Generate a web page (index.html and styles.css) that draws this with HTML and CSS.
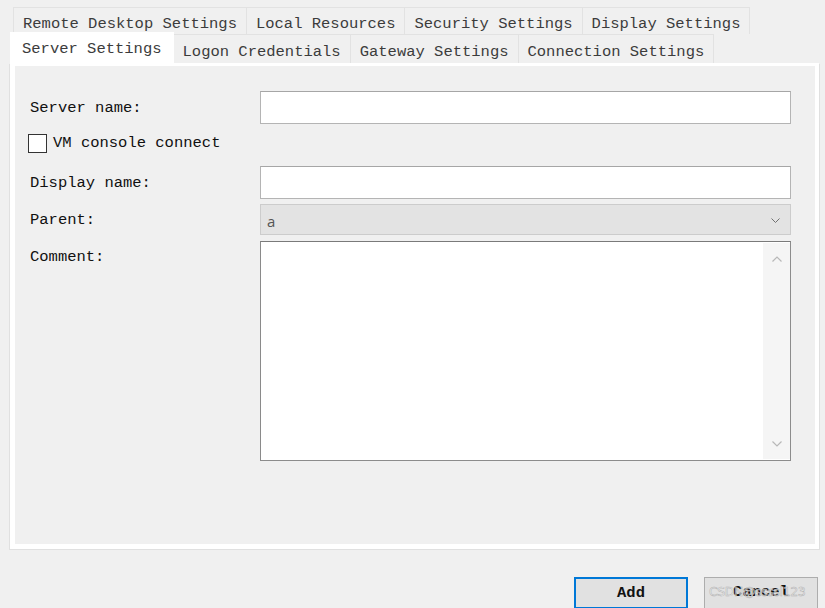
FILE: index.html
```html
<!DOCTYPE html>
<html>
<head>
<meta charset="utf-8">
<link rel="stylesheet" href="styles.css">
</head>
<body>
<div class="tabs">
  <div class="tab-row row1">
    <div class="tab">Remote Desktop Settings</div>
    <div class="tab">Local Resources</div>
    <div class="tab">Security Settings</div>
    <div class="tab">Display Settings</div>
  </div>
  <div class="tab-row row2">
    <div class="tab active">Server Settings</div>
    <div class="tab">Logon Credentials</div>
    <div class="tab">Gateway Settings</div>
    <div class="tab">Connection Settings</div>
  </div>
</div>
<div class="panel">
  <div class="page">
    <div class="field">
      <div class="label">Server name:</div>
      <div class="input"></div>
    </div>
    <div class="check-row">
      <span class="checkbox"></span>
      <span class="check-label">VM console connect</span>
    </div>
    <div class="field display">
      <div class="label">Display name:</div>
      <div class="input"></div>
    </div>
    <div class="field parent">
      <div class="label">Parent:</div>
      <div class="combo">
        <span class="combo-text">a</span>
        <svg class="chev" width="9" height="5" viewBox="0 0 9 5"><path d="M0.5 0.5 L4.5 4.5 L8.5 0.5" fill="none" stroke="#707070" stroke-width="1"/></svg>
      </div>
    </div>
    <div class="field comment">
      <div class="label">Comment:</div>
      <div class="textarea">
        <div class="vscroll">
          <svg width="10" height="6" viewBox="0 0 10 6"><path d="M0.5 5.5 L5 1 L9.5 5.5" fill="none" stroke="#b8b8b8" stroke-width="1.2"/></svg>
          <svg width="10" height="6" viewBox="0 0 10 6"><path d="M0.5 0.5 L5 5 L9.5 0.5" fill="none" stroke="#b8b8b8" stroke-width="1.2"/></svg>
        </div>
      </div>
    </div>
  </div>
</div>
<div class="buttons">
  <div class="btn primary">Add</div>
  <div class="btn">Cancel<span class="watermark">CSDN@ssssl123</span></div>
</div>
</body>
</html>
```
FILE: styles.css
```css
html, body {
  margin: 0;
  padding: 0;
  background: #f0f0f0;
  width: 825px;
  height: 608px;
  overflow: hidden;
  font-family: "Liberation Mono", "DejaVu Sans Mono", monospace;
  font-size: 15.5px;
}
.tabs {
  padding-top: 7px;
  padding-left: 10px;
}
.tab-row {
  display: flex;
}
.row1 {
  margin-left: 3px;
  height: 27px;
}
.row2 {
  margin-left: 2px;
  height: 29px;
  position: relative;
}
.tab {
  box-sizing: border-box;
  border: 1px solid #e2e2e2;
  border-bottom: none;
  margin-right: -1px;
  padding: 0 9px;
  color: #3c3c3c;
  white-space: nowrap;
  background: #f0f0f0;
}
.row1 .tab {
  height: 27px;
  line-height: 33px;
}
.row2 .tab {
  height: 29px;
  line-height: 34px;
}
.row2 .tab.active {
  background: #fff;
  border-color: #ffffff;
  margin: -2px -1px 0 -2px;
  height: 32px;
  padding: 0 11px;
  line-height: 32px;
  position: relative;
  z-index: 2;
}
.panel {
  box-sizing: border-box;
  margin-left: 9px;
  width: 811px;
  height: 487px;
  background: #fff;
  border: 1px solid #e0e0e0;
  border-top-color: #fff;
  padding: 2px 4px 5px 5px;
}
.page {
  background: #f0f0f0;
  height: 100%;
  padding: 25px 24px 0 14px;
  box-sizing: border-box;
  color: #111;
}
.field {
  display: flex;
  align-items: center;
}
.label {
  width: 230px;
  flex: none;
  white-space: nowrap;
  padding-left: 1px;
}
.input {
  flex: 1;
  height: 33px;
  box-sizing: border-box;
  background: #fff;
  border: 1px solid #b4b4b4;
  border-top-color: #a6a6a6;
}
.check-row {
  display: flex;
  align-items: center;
  margin-top: 10px;
  height: 19px;
}
.checkbox {
  width: 19px;
  height: 19px;
  box-sizing: border-box;
  border: 1px solid #333;
  background: #fff;
  margin-left: -1px;
}
.check-label {
  margin-left: 6px;
  position: relative;
  top: -1px;
}
.display {
  margin-top: 13px;
}
.parent {
  margin-top: 5px;
}
.combo {
  flex: 1;
  height: 31px;
  box-sizing: border-box;
  background: #e3e3e3;
  border: 1px solid #cccccc;
  display: flex;
  align-items: center;
  justify-content: space-between;
  padding: 0 10px 0 6px;
}
.combo-text {
  font-family: "Open Sans", "Noto Sans", sans-serif;
  font-size: 15px;
  color: #555;
  position: relative;
  top: 1px;
}
.chev {
  display: block;
  margin-top: 2px;
}
.comment {
  margin-top: 6px;
  align-items: flex-start;
}
.comment .label {
  padding-top: 7px;
}
.textarea {
  flex: 1;
  height: 220px;
  box-sizing: border-box;
  background: #fff;
  border: 1px solid #8c8c8c;
  border-top-color: #7a7a7a;
  border-left-color: #8a8a8a;
  display: flex;
  justify-content: flex-end;
}
.vscroll {
  width: 27px;
  margin: 1px 0 1px 0;
  background: #f5f5f5;
  display: flex;
  flex-direction: column;
  align-items: center;
  justify-content: space-between;
  padding: 13px 0 12px;
  box-sizing: border-box;
}
.vscroll svg {
  display: block;
}
.buttons {
  display: flex;
  justify-content: flex-end;
  gap: 16px;
  padding-right: 7px;
  margin-top: 27px;
}
.btn {
  position: relative;
  width: 114px;
  height: 32px;
  box-sizing: border-box;
  border: 1px solid #adadad;
  background: #e1e1e1;
  text-align: center;
  line-height: 28px;
  font-weight: bold;
  color: #111;
}
.btn.primary {
  border: 2px solid #0078d7;
}
.watermark {
  position: absolute;
  left: 4px;
  top: 0;
  font-family: "DejaVu Sans", sans-serif;
  font-weight: normal;
  font-size: 12.5px;
  color: rgba(255,255,255,0.55);
  -webkit-text-stroke: 0.5px #b0b0b0;
  letter-spacing: -0.4px;
  white-space: nowrap;
}
```
